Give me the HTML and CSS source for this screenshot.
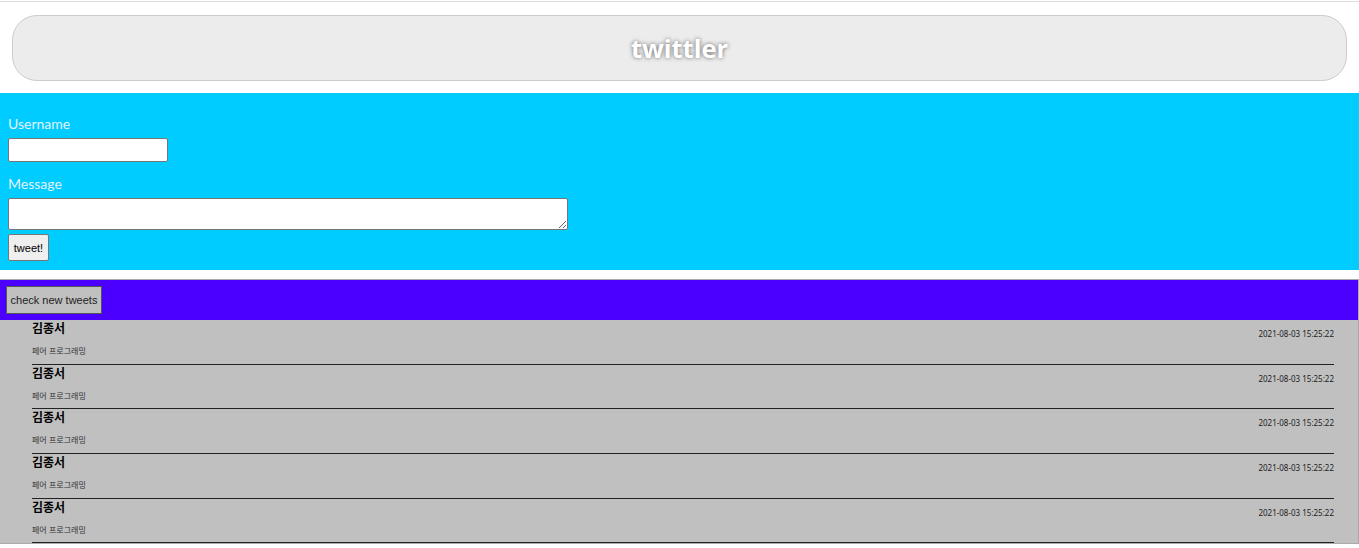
FILE: index.html
```html
<!DOCTYPE html>
<html lang="ko">
<head>
<meta charset="utf-8">
<title>twittler</title>
<link rel="stylesheet" href="styles.css">
</head>
<body>
<div class="topline"></div>
<header class="header"><h1 class="title">twittler</h1></header>
<section class="composer">
  <label class="label" for="username">Username</label>
  <input class="username" id="username" type="text">
  <label class="label label-msg" for="message">Message</label>
  <textarea class="message" id="message"></textarea>
  <button class="tweet-btn">tweet!</button>
</section>
<section class="feed">
  <div class="feed-bar"><button class="check-btn">check new tweets</button></div>
  <ul class="tweets">
    <li class="tweet"><div class="tweet-head"><span class="name">김종서</span><span class="date">2021-08-03 15:25:22</span></div><div class="text">페어 프로그래밍</div></li>
    <li class="tweet"><div class="tweet-head"><span class="name">김종서</span><span class="date">2021-08-03 15:25:22</span></div><div class="text">페어 프로그래밍</div></li>
    <li class="tweet"><div class="tweet-head"><span class="name">김종서</span><span class="date">2021-08-03 15:25:22</span></div><div class="text">페어 프로그래밍</div></li>
    <li class="tweet"><div class="tweet-head"><span class="name">김종서</span><span class="date">2021-08-03 15:25:22</span></div><div class="text">페어 프로그래밍</div></li>
    <li class="tweet"><div class="tweet-head"><span class="name">김종서</span><span class="date">2021-08-03 15:25:22</span></div><div class="text">페어 프로그래밍</div></li>
  </ul>
</section>
</body>
</html>
```
FILE: styles.css
```css
html, body {
  margin: 0;
  padding: 0;
  background: #fff;
  font-family: "Noto Sans", "Noto Sans CJK KR", sans-serif;
}
.topline {
  margin-top: 1px;
  height: 1px;
  background: #dddddd;
}
.header {
  margin: 13px 12px 12px;
  height: 64px;
  border: 1px solid #cccccc;
  border-radius: 25px;
  background: #ececec;
  display: flex;
  align-items: center;
  justify-content: center;
}
.title {
  margin: 0;
  font-family: "Open Sans", "Noto Sans", sans-serif;
  font-size: 25.5px;
  font-weight: 700;
  color: #ffffff;
  text-shadow: 0 0 4px #666;
}
.composer {
  background: #00ccff;
  padding: 21px 8px 9px;
  display: flex;
  flex-direction: column;
  align-items: flex-start;
}
.label {
  display: block;
  font-family: "Lato", "Noto Sans", sans-serif;
  font-size: 14px;
  line-height: 20px;
  color: #e2f2ff;
  margin-bottom: 4px;
}
.label-msg {
  margin-top: 12px;
}
.username {
  box-sizing: border-box;
  width: 160px;
  height: 24px;
  margin: 0;
  border: 1px solid #767676;
  border-radius: 2px;
  background: #fff;
}
.message {
  box-sizing: border-box;
  width: 560px;
  height: 32px;
  margin: 0;
  border: 1px solid #767676;
  border-radius: 2px;
  background: #fff;
}
.tweet-btn {
  margin-top: 4px;
  box-sizing: border-box;
  height: 27px;
  width: 41px;
  padding: 0;
  font-family: "Liberation Sans", Arial, sans-serif;
  font-size: 11px;
  color: #000;
  background: #efefef;
  border: 1px solid #767676;
  border-radius: 2px;
}
.feed {
  margin-top: 9px;
  border: 1px solid #aaaaaa;
  border-left: none;
  background: #c0c0c0;
}
.feed-bar {
  background: #4b00ff;
  height: 40px;
  padding: 6px;
  box-sizing: border-box;
  display: flex;
  align-items: flex-start;
}
.check-btn {
  box-sizing: border-box;
  height: 28px;
  width: 96px;
  padding: 0;
  font-family: "Liberation Sans", Arial, sans-serif;
  font-size: 11px;
  color: #222;
  background: #c0c0c0;
  border: 1px solid #555;
}
.tweets {
  list-style: none;
  margin: 0 24px 0 32px;
  padding: 0;
}
.tweet {
  height: 43.7px;
  border-bottom: 1px solid #222;
  display: flex;
  flex-direction: column;
}
.tweet-head {
  display: flex;
  justify-content: space-between;
  height: 20px;
  margin-top: 0;
}
.name {
  font-family: "Noto Sans CJK KR", sans-serif;
  font-weight: 700;
  font-size: 12px;
  line-height: 16px;
  color: #000;
}
.date {
  align-self: flex-end;
  font-size: 8px;
  line-height: 12px;
  color: #222;
}
.text {
  margin-top: 5px;
  font-family: "Noto Sans CJK KR", sans-serif;
  font-size: 8px;
  line-height: 12px;
  color: #333;
}
```
